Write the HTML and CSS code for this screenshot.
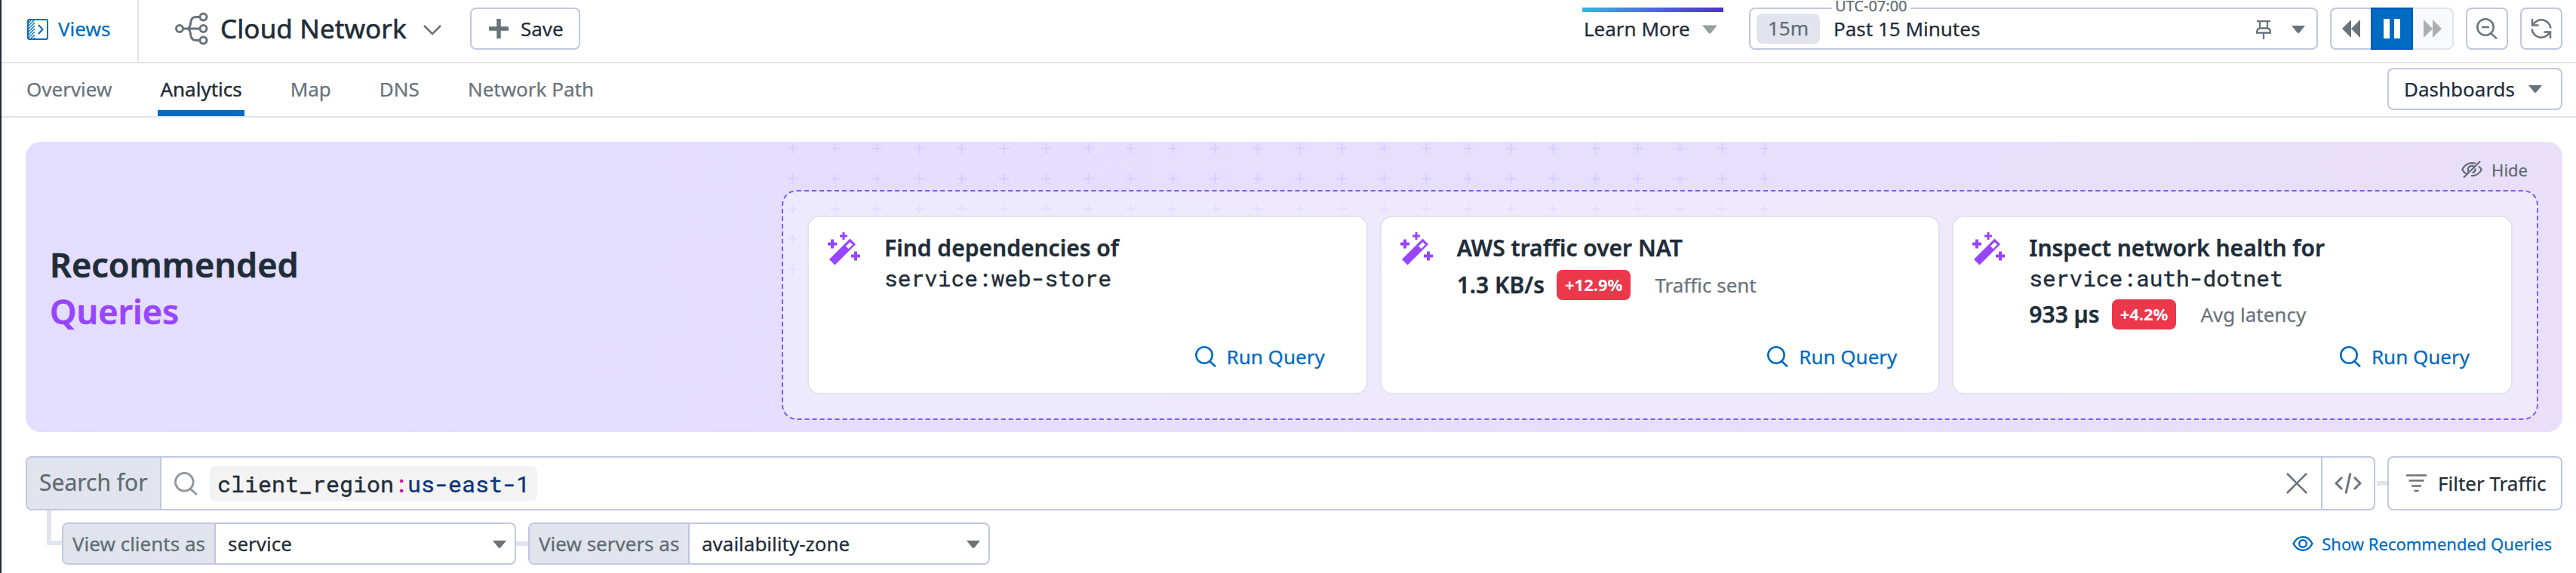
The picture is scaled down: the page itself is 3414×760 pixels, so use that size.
FILE: index.html
```html
<!DOCTYPE html>
<html lang="en">
<head>
<meta charset="utf-8">
<title>Cloud Network</title>
<link rel="stylesheet" href="styles.css">
</head>
<body>
<svg class="defs" width="0" height="0" aria-hidden="true">
  <symbol id="search" viewBox="0 0 28 28"><circle cx="12" cy="12" r="10.7"/><path d="M18.8 19.8 27 27.3"/></symbol>
  <symbol id="caret" viewBox="0 0 18 10"><path d="M0 0h18l-7.5 9.2q-1.500 1.500-3 0z"/></symbol>
  <symbol id="wand" viewBox="0 0 44 44"><path fill-rule="evenodd" d="M29.500 8.500 37 16 9.500 43.500 2 36zM29.500 13l-5.500 5.500 3.500 3.500 5.500-5.500z"/><path d="M19.500 0h3v3.500H26v3h-3.500V10h-3V6.500H16v-3h3.500zM4 9.500h4v4h4v4H8v4H4v-4H0v-4h4zM35 25.500h4v4h4v4h-4v4h-4v-4h-4v-4h4z"/></symbol>
</svg>
<div class="app">
  <header class="top">
    <a class="views"><svg width="28" height="28" viewBox="0 0 28 28"><rect x="1" y="1" width="26" height="26" rx="2"/><path class="thin" d="M2 5l3-3M2 9l7-7M2 13l8-8M2 17l8-8M2 21l8-8M2 25l8-8M4 27l6-6M8 27l2-2"/><path d="m15 8 5.500 6-5.500 6"/></svg>Views</a>
    <div class="title">
      <svg width="44" height="44" viewBox="0 0 44 44"><circle cx="6" cy="22" r="4.500"/><circle cx="37.500" cy="6.500" r="4.500"/><circle cx="37.500" cy="22" r="4.500"/><circle cx="37.500" cy="37.500" r="4.500"/><path d="M10.500 22H33M33 6.500h-5q-6 0-7 6-1 8-4 9.500 3 1.500 4 9.500 1 6 7 6h5"/></svg>
      <h1>Cloud Network</h1>
      <svg class="chev" width="24" height="14" viewBox="0 0 24 14"><path d="m1 1 11 11L23 1"/></svg>
    </div>
    <button class="btn save"><svg width="26" height="26" viewBox="0 0 26 26"><path d="M13 0v26M0 13h26"/></svg>Save</button>
    <div class="learn">Learn More<svg class="caret" width="20" height="12"><use href="#caret"/></svg></div>
    <div class="picker"><span class="utc">UTC-07:00</span><span class="pill">15m</span><span class="range">Past 15 Minutes</span>
      <svg class="pin" width="20" height="25" viewBox="0 0 20 25"><path d="M1 1.200h18M5 1.500v10M15 1.500v10M5 10.500Q1 11 1 16.500h18q0-5.500-4-6zM10 16.500V25"/></svg>
      <svg class="caret" width="18" height="10"><use href="#caret"/></svg></div>
    <div class="play">
      <span class="back"><svg width="24" height="24" viewBox="0 0 24 24"><path d="M12 0v24L0 12zM24 0v24L12 12z"/></svg></span>
      <span class="pause"><svg width="22" height="26" viewBox="0 0 22 26"><path d="M0 0h8v26H0zM14 0h8v26h-8z"/></svg></span>
      <span class="fwd"><svg width="24" height="24" viewBox="0 0 24 24"><path d="M0 0v24l12-12zM12 0v24l12-12z"/></svg></span>
    </div>
    <button class="btn square"><svg width="28" height="28" viewBox="0 0 28 28"><use href="#search"/><path d="M7 12h10"/></svg></button>
    <button class="btn square"><svg width="28" height="28" viewBox="0 0 28 28"><path d="M2 1v8.500h8.500M3 9A12.500 12.500 0 0 1 26.500 13.500M26 27v-8.500h-8.500M25 19A12.500 12.500 0 0 1 1.500 14.500"/></svg></button>
  </header>
  <nav class="tabs">
    <a>Overview</a><a class="active">Analytics</a><a>Map</a><a>DNS</a><a>Network Path</a>
    <button class="btn dash">Dashboards<svg class="caret" width="18" height="10"><use href="#caret"/></svg></button>
  </nav>
  <section class="banner">
    <svg class="crosses" width="1304" height="176"><defs><pattern id="plus" width="56" height="40" patternUnits="userSpaceOnUse"><path d="M6.500 0v14M0 7h13"/></pattern></defs><rect width="1304" height="176" fill="url(#plus)" stroke="none"/></svg>
    <h2>Recommended<br><em>Queries</em></h2>
    <div class="right">
      <div class="hide"><svg width="28" height="24" viewBox="0 0 28 24"><path d="M3 22.500 25 1M7.500 18C4.500 16.500 2.500 14.500 1.200 12 5 4.500 12 1.500 19 4M23 7.500q2.500 2 3.800 4.500C24 17.500 18.500 20.500 13 20M9.500 15q-2-5 2-7.500 3-1.500 5.500.5M18.500 10.500q.5 4.500-4 5.500"/></svg>Hide</div>
      <div class="panel">
        <article class="card"><svg class="wand" width="44" height="44"><use href="#wand"/></svg>
          <h3>Find dependencies of</h3><code>service:web-store</code>
          <a class="run"><svg width="28" height="28"><use href="#search"/></svg>Run Query</a></article>
        <article class="card"><svg class="wand" width="44" height="44"><use href="#wand"/></svg>
          <h3>AWS traffic over NAT</h3>
          <div class="metric"><b>1.3 KB/s</b><i>+12.9%</i><span>Traffic sent</span></div>
          <a class="run"><svg width="28" height="28"><use href="#search"/></svg>Run Query</a></article>
        <article class="card"><svg class="wand" width="44" height="44"><use href="#wand"/></svg>
          <h3>Inspect network health for</h3><code>service:auth-dotnet</code>
          <div class="metric"><b>933 µs</b><i>+4.2%</i><span>Avg latency</span></div>
          <a class="run"><svg width="28" height="28"><use href="#search"/></svg>Run Query</a></article>
      </div>
    </div>
  </section>
  <div class="searchrow">
    <div class="searchbox">
      <span class="label">Search for</span>
      <svg class="mag" width="31" height="31"><use href="#search"/></svg>
      <code class="chip">client_region<span class="colon">:</span><span class="val">us-east-1</span></code>
      <svg class="clear" width="28" height="28" viewBox="0 0 28 28"><path d="m1 1 26 26M27 1 1 27"/></svg>
      <span class="code"><svg width="36" height="28" viewBox="0 0 36 28"><path d="M10 6 2 14l8 8M26 6l8 8-8 8M21 .5 15 27.500"/></svg></span>
    </div>
    <i class="link"></i>
    <button class="btn filter"><svg width="27" height="24" viewBox="0 0 27 24"><path d="M0 1.500h27M3.500 8.500h20M7 15.500h13M10.500 22h6"/></svg>Filter Traffic</button>
  </div>
  <div class="group">
    <i class="elbow"></i>
    <div class="select clients"><span class="label">View clients as</span><span class="value">service</span><svg class="caret" width="18" height="10"><use href="#caret"/></svg></div>
    <i class="join"></i>
    <div class="select servers"><span class="label">View servers as</span><span class="value">availability-zone</span><svg class="caret" width="18" height="10"><use href="#caret"/></svg></div>
    <a class="show"><svg width="28" height="20" viewBox="0 0 28 20"><path d="M1.500 10Q6 1.200 14 1.200T26.500 10Q22 18.800 14 18.800T1.500 10z"/><circle cx="14" cy="10" r="4.800"/></svg>Show Recommended Queries</a>
  </div>
</div>
</body>
</html>
```
FILE: styles.css
```css
* { box-sizing: border-box; }
body { margin: 0; background: #fff; color: #1f2d38; font: 400 26px/36px "Noto Sans", "Open Sans", sans-serif; -webkit-text-stroke: .25px; }
.app { height: 760px; border-left: 2px solid #262a3b; overflow: hidden; white-space: nowrap; }
svg { display: block; flex: none; fill: none; stroke: #69737b; stroke-width: 3; }
.defs { position: absolute; }
h1, h2, h3 { margin: 0; }
code { font-family: "Roboto Mono", "Noto Sans Mono", "DejaVu Sans Mono", monospace; font-size: 30px; -webkit-text-stroke: .4px; }
.caret { fill: #69737b; stroke: none; }
.btn { display: flex; align-items: center; height: 56px; margin: 0; padding: 0; border: 2px solid #c0c7e0; border-radius: 8px; background: #fff; color: inherit; font: inherit; }

.top { display: flex; height: 84px; padding-right: 18px; border-bottom: 2px solid #e1e4ec; }
.top > * { flex: none; }
.views { display: flex; align-items: center; gap: 13px; width: 182px; height: 82px; padding: 0 0 6px 34px; border-right: 2px solid #e1e4ec; color: #006bc2; }
.views svg { stroke: #006bc2; stroke-width: 2; margin-top: 1px; }
.views .thin { stroke-width: 1.2; }
.title { display: flex; align-items: center; height: 76px; margin-left: 48px; gap: 16px; }
h1 { font-size: 35px; font-weight: 400; line-height: 48px; width: 250px; -webkit-text-stroke: .6px; letter-spacing: .1px; }
.chev { margin: 4px 0 0 3px; stroke-width: 2.600; }
.save { width: 146px; margin: 10px 0 0 38px; padding-left: 23px; gap: 16px; }
.save svg { stroke-width: 5.500; }
.learn { position: relative; display: flex; align-items: center; justify-content: space-between; width: 187px; height: 56px; margin: 10px 0 0 auto; padding: 0 8px 0 2px; }
.learn::before { content: ""; position: absolute; left: 0; right: 0; top: 0; height: 6px; background: linear-gradient(90deg, #3bb4e0, #4b71d8 45%, #4f30cf); }
.learn .caret { fill: #979ea2; margin-top: 2px; }
.picker { position: relative; display: flex; align-items: center; width: 754px; height: 56px; margin: 10px 16px 0 34px; border: 2px solid #c0c7e0; border-radius: 8px; padding: 0 15px 0 8px; }
.utc { position: absolute; left: 108px; top: -12px; padding: 0 4px; background: #fff; color: #5f6b72; font: 400 20px/16px "Noto Sans", sans-serif; }
.pill { width: 84px; height: 40px; line-height: 38px; border-radius: 8px; background: #e1e4ec; color: #5f6b72; text-align: center; }
.range { margin: 0 auto 0 18px; }
.pin { stroke-width: 2.300; margin: 2px 27px 0 0; }
.picker .caret { margin-top: 2px; }
.play { display: flex; margin: 10px 16px 0 0; }
.play span { display: grid; place-items: center; width: 54px; height: 56px; border: 2px solid #c0c7e0; }
.play svg { fill: #69737b; stroke: none; }
.play .back { border-right: 0; border-radius: 8px 0 0 8px; }
.play .pause { width: 56px; background: #006bc2; border-color: #0a56c0; }
.play .pause svg { fill: #fff; }
.play .fwd { background: #f8f9fb; border-color: #e1e4ec; border-left: 0; border-radius: 0 8px 8px 0; }
.play .fwd svg { fill: #a9afb3; }
.square { width: 56px; margin: 10px 0 0; justify-content: center; }
.square + .square { margin-left: 16px; }
.square svg { stroke-width: 2.500; }

.tabs { display: flex; height: 72px; padding: 0 18px 0 30px; border-bottom: 2px solid #e1e4ec; color: #69737b; }
.tabs a { height: 70px; margin-right: 58px; padding: 16px 3px 0; }
.tabs .active { color: #1f2d38; border-bottom: 8px solid #006bc2; -webkit-text-stroke: .4px; }
.dash { width: 232px; margin: 6px 0 0 auto; padding: 0 25px 0 20px; justify-content: space-between; color: #1f2d38; }

.banner { position: relative; display: flex; height: 385px; margin: 32px 18px 0 32px; padding: 24px 32px 16px 32px; border-radius: 20px; background: linear-gradient(100deg, #e3deff 0%, #e5defe 40%, #e9dff9 100%); justify-content: space-between; }
.crosses { position: absolute; left: 1010px; top: 2px; stroke: #d6cfff; stroke-width: 2; }
h2 { margin-top: 108px; font-size: 45px; line-height: 62px; font-weight: 600; -webkit-text-stroke: .6px; }
em { color: #9745ff; font-style: normal; }
.right { position: relative; width: 2328px; }
.hide { display: flex; align-items: center; justify-content: flex-end; gap: 12px; height: 26px; margin: 0 14px 14px 0; color: #5f6b72; font-size: 22px; }
.hide svg { stroke: #5f6b72; stroke-width: 2.200; }
.panel { display: grid; grid-template-columns: repeat(3, 1fr); gap: 16px; height: 305px; padding: 32px; border: 2px dashed #7b5cfa; border-radius: 20px; background: #ffffff55; background-clip: padding-box; }
.card { position: relative; height: 237px; padding: 19px 0 0 100px; border: 2px solid #e1e4ec; border-radius: 16px; background: #fff; }
.wand { position: absolute; left: 25px; top: 20px; fill: #9745ff; stroke: none; }
h3 { font-size: 30px; line-height: 44px; font-weight: 600; -webkit-text-stroke: .4px; }
.card code { display: block; height: 37px; font-size: 29.5px; line-height: 36px; }
.card code + .metric { margin-top: 9px; }
.metric { display: flex; align-items: center; height: 40px; margin-top: 7px; }
.metric b { font-size: 30px; font-weight: 600; -webkit-text-stroke: .4px; }
.metric i { height: 40px; margin: 0 32px 0 16px; padding: 0 11px; border-radius: 8px; background: #ed374a; color: #fff; font: 700 22px/38px "Noto Sans", sans-serif; -webkit-text-stroke: 0; }
.metric span { color: #69737b; }
.run { position: absolute; right: 55px; bottom: 30px; display: flex; align-items: center; gap: 14px; color: #006bc2; }
.run svg, .show svg { stroke: #006bc2; stroke-width: 2.600; }

.searchrow { display: flex; align-items: center; height: 72px; margin: 32px 18px 0 32px; }
.searchbox { display: flex; align-items: center; width: 3114px; height: 72px; border: 2px solid #c0c7e0; border-radius: 8px; }
.label { display: flex; align-items: center; height: 100%; background: #e1e4ec; border-right: 2px solid #c0c7e0; border-radius: 6px 0 0 6px; color: #5f6b72; }
.searchbox .label { width: 178px; padding: 0 0 3px 16px; font-size: 30px; }
.mag { margin: 0 16px 0 17px; stroke: #8f969b; stroke-width: 2.500; }
.chip { height: 47px; padding: 0 10px; border-radius: 8px; background: #f3f3f3; line-height: 48px; }
.colon { color: #c71599; }
.val { color: #0a3478; }
.clear { margin: 0 18px 0 auto; stroke-width: 2.500; }
.code { display: grid; place-items: center; width: 70px; height: 68px; border-left: 2px solid #c0c7e0; }
.link { width: 14px; height: 6px; margin-left: 2px; background: #e1e4ec; }
.filter { width: 232px; height: 72px; padding-left: 23px; gap: 15px; }
.filter svg { stroke-width: 2.700; }
.group { display: flex; margin: 0 32px 0 60px; align-items: center; height: 88px; }
.elbow { align-self: flex-start; width: 20px; height: 46px; border: solid #e1e4ec; border-width: 0 0 6px 6px; }
.select { display: flex; align-items: center; height: 56px; border: 2px solid #c0c7e0; border-radius: 8px; padding-right: 11px; }
.clients { width: 602px; }
.servers { width: 612px; }
.clients .label { width: 202px; padding-left: 12px; }
.servers .label { width: 212px; padding-left: 12px; }
.value { margin: 0 auto 0 16px; }
.select .caret { margin-top: 2px; }
.join { width: 16px; height: 6px; background: #e1e4ec; }
.show { display: flex; align-items: center; gap: 11px; margin-left: auto; color: #006bc2; font-size: 22px; }
.show svg { stroke-width: 2.400; }
```
